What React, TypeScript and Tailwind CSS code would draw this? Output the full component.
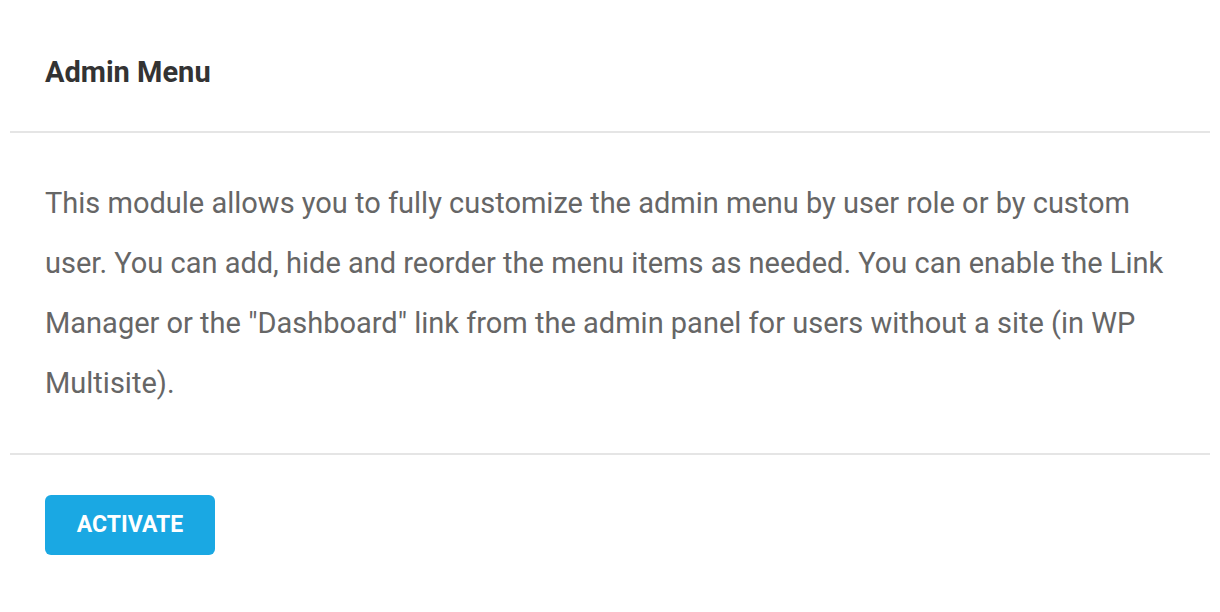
export default function App() {
  return (
    <div className="w-[1220px] h-[612px] bg-white" style={{ fontFamily: 'Roboto, "Liberation Sans", sans-serif' }}>
      <div className="mx-[10px]">
        <div className="h-[133px] pt-[58px] px-[35px] border-b-2 border-[#e5e5e5]">
          <h2 className="text-[29px] font-bold text-[#333333] leading-none">Admin Menu</h2>
        </div>
        <div className="px-[35px] pt-[40px] pb-[40px] border-b-2 border-[#e5e5e5]">
          <p className="text-[29px] leading-[60px] text-[#666666]">
            This module allows you to fully customize the admin menu by user role or by custom user. You can add, hide and reorder the menu items as needed. You can enable the Link Manager or the "Dashboard" link from the admin panel for users without a site (in WP Multisite).
          </p>
        </div>
        <div className="px-[35px] pt-[40px]">
          <button className="w-[170px] h-[60px] rounded-[6px] bg-[#1aa8e3] text-white font-bold text-[23px]">ACTIVATE</button>
        </div>
      </div>
    </div>
  );
}
